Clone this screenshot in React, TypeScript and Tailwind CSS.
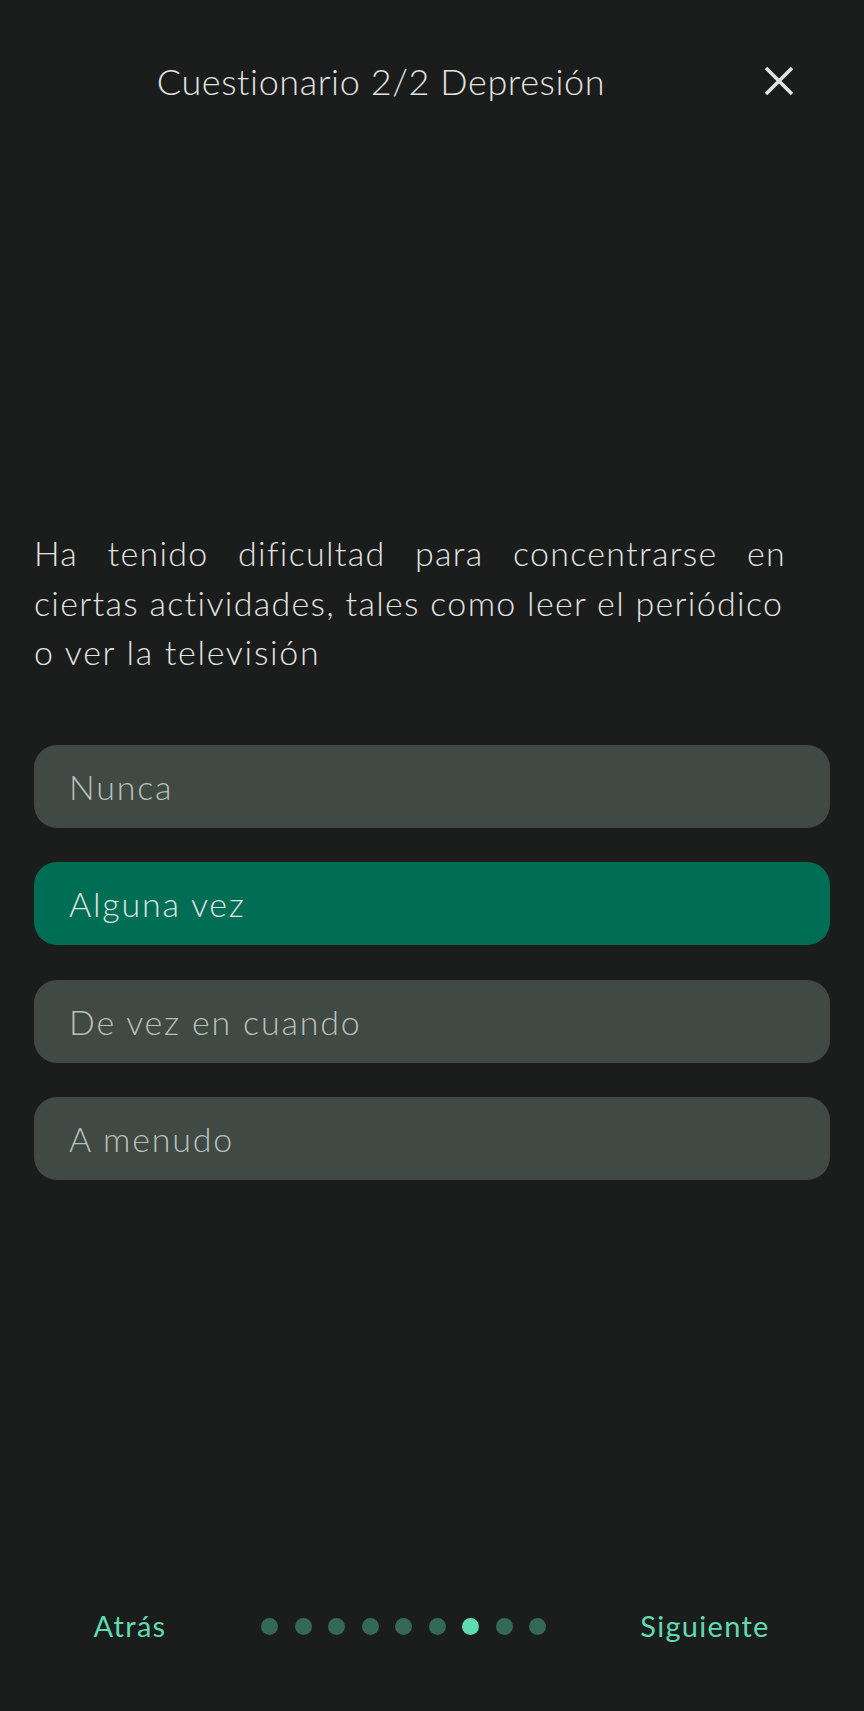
import { useState } from 'react'

const options = ['Nunca', 'Alguna vez', 'De vez en cuando', 'A menudo']

export default function App() {
  const [selected, setSelected] = useState(1)
  const step = 6

  return (
    <main
      className="min-h-screen bg-[#1b1c1c] flex flex-col px-[34px]"
      style={{ fontFamily: 'Lato, "Noto Sans", sans-serif' }}
    >
      {/* Header */}
      <div className="flex items-center h-[48px] mt-[57px]">
        <h1 className="flex-1 text-center text-[36px] font-light tracking-[0.6px] text-[#e2e3e1]">
          Cuestionario 2/2 Depresión
        </h1>
        <div className="w-[102px] flex justify-center">
          <button className="w-[40px] h-[40px] flex items-center justify-center text-[#e2e3e1]">
            <svg width="30" height="30" viewBox="0 0 30 30" fill="none">
              <path d="M2 2 L28 28 M28 2 L2 28" stroke="currentColor" strokeWidth="3.6" />
            </svg>
          </button>
        </div>
      </div>

      {/* Question */}
      <div className="mt-[423px] w-[752px] text-[34px] font-light leading-[49.5px] tracking-[1.3px] text-[#e2e3e1]">
        <p className="text-justify [text-align-last:justify] whitespace-nowrap">
          Ha tenido dificultad para concentrarse en
        </p>
        <p className="whitespace-nowrap">ciertas actividades, tales como leer el periódico</p>
        <p className="whitespace-nowrap tracking-[1.7px]">o ver la televisión</p>
      </div>

      {/* Options */}
      <div className="mt-[68px] flex flex-col gap-[34.5px]">
        {options.map((opt, i) => (
          <button
            key={opt}
            onClick={() => setSelected(i)}
            className={
              i === selected
                ? 'h-[83px] rounded-[23px] bg-[#006d55] px-[35px] text-left text-[34px] font-light tracking-[1.8px] text-[#dfe5e1]'
                : 'h-[83px] rounded-[23px] bg-[#404944] px-[35px] text-left text-[34px] font-light tracking-[1.8px] text-[#b9c0bb]'
            }
          >
            {opt}
          </button>
        ))}
      </div>

      <div className="flex-1" />

      {/* Bottom nav */}
      <div className="flex items-center h-[48px] mb-[61px]">
        <button className="w-[192px] text-center text-[29px] tracking-[1.3px] text-[#5fdbb0]">Atrás</button>
        <div className="ml-[35px] flex gap-[16.5px]">
          {Array.from({ length: 9 }).map((_, i) => (
            <span
              key={i}
              className={
                i === step
                  ? 'w-[17px] h-[17px] rounded-full bg-[#5fdbb1]'
                  : 'w-[17px] h-[17px] rounded-full bg-[#336956]'
              }
            />
          ))}
        </div>
        <div className="flex-1" />
        <button className="w-[160px] mr-[45px] text-center text-[29px] tracking-[1.3px] text-[#5fdbb0]">
          Siguiente
        </button>
      </div>
    </main>
  )
}
